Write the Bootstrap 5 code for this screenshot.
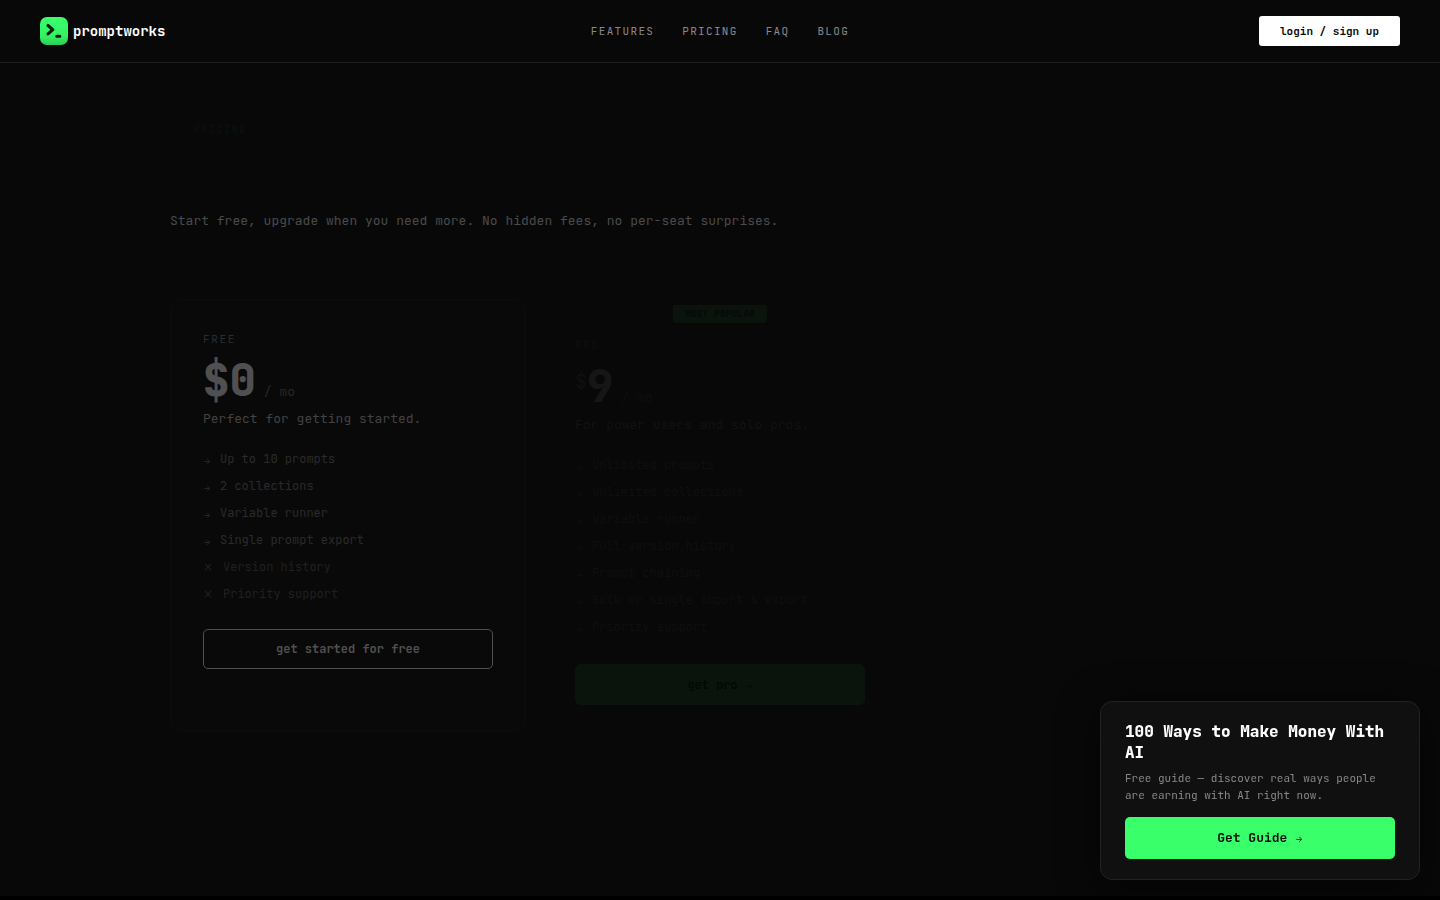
<!DOCTYPE html>
<html lang="en">
<head>
<meta charset="utf-8">
<meta name="viewport" content="width=device-width, initial-scale=1">
<title>promptworks – Pricing</title>
<link href="https://cdn.jsdelivr.net/npm/bootstrap@5.3.0/dist/css/bootstrap.min.css" rel="stylesheet">
<style>
:root { --accent: #39ff6a; }
body { background: #000; color: #fff; font-family: "JetBrains Mono", "DejaVu Sans Mono", "Liberation Mono", monospace; font-size: 13px; line-height: 20px; }
a { text-decoration: none; }
.site-header { background: #080808; border-bottom: 1px solid #1e1e1e; }
.header-bar { height: 62px; padding: 0 40px; display: grid; grid-template-columns: 1fr auto 1fr; align-items: center; }
.brand { color: #fff; font-size: 14px; font-weight: 700; gap: 5px; }
.main-nav { gap: 28px; font-size: 11px; letter-spacing: .12em; }
.main-nav a { color: #888; }
.btn-login { background: #fff; color: #080808; font-size: 11px; font-weight: 700; line-height: 16px; padding: 7px 18px; border: 0; border-radius: 3px; min-width: 141px; }
.pricing-section { background: #080808; min-height: calc(100vh - 67px); }
.pricing-inner { max-width: 1100px; padding-top: 57px; }
.eyebrow { font-size: 10px; letter-spacing: .15em; color: var(--accent); opacity: .04; padding-left: 24px; line-height: 20px; }
.intro { color: #4b4b4b; margin-top: 71px; }
.plan-grid { display: grid; grid-template-columns: repeat(3, 1fr); gap: 16px; margin-top: 68px; align-items: start; }
.plan { min-height: 433px; border: 1px solid #0c0c0c; border-radius: 10px; padding: 29px 32px; background: #090909; position: relative; overflow: hidden; }
.plan-name { font-size: 11px; letter-spacing: .15em; color: #2d2d2d; font-weight: 400; margin: 0; line-height: 20px; }
.price { line-height: 20px; margin-top: 7px; gap: 8px; color: #272727; }
.amount { font-size: 44px; font-weight: 800; line-height: 48px; color: #505050; }
.plan-text { color: #434343; margin: 5px 0 21px; }
.features { font-size: 12px; color: #2b2b2b; line-height: 19px; gap: 8px; margin-bottom: 25px; }
.features li { gap: 10px; }
.tick { font-family: Inter, sans-serif; font-size: 8px; line-height: 23px; height: 19px; width: 7px; }
.cross { font-family: "DejaVu Sans", sans-serif; font-size: 12px; width: 10px; text-align: center; }
.no-feature { color: #202020; }
.btn-plan { width: 100%; height: 40px; font-size: 12px; font-weight: 700; border-radius: 5px; padding: 0; color: #505050; border: 1px solid #505050; background: none; }
.plan-pro { margin-top: 6px; border: 0; padding: 30px 33px; background: #080808; }
.plan-pro .plan-name, .plan-pro .features, .plan-pro .price { color: #0f0f0f; }
.plan-pro .amount { color: #161616; }
.plan-pro .plan-text { color: #121212; }
.plan-pro .features { margin-bottom: 27px; }
.plan-pro .currency { font-size: 20px; line-height: 20px; vertical-align: 14px; font-weight: 400; color: #101010; }
.plan-pro .btn-plan { background: #0a140d; border-color: #0a140d; color: #050706; height: 41px; }
.popular { position: absolute; top: 0; left: 50%; transform: translateX(-50%); background: #0a140d; color: #050806; font-size: 9px; font-weight: 700; letter-spacing: .05em; line-height: 18px; padding: 0 12px; border-radius: 0 0 4px 4px; white-space: nowrap; }
.guide { position: fixed; right: 20px; bottom: 20px; width: 320px; background: #101010; border: 1px solid #222; border-radius: 12px; padding: 19px 24px 20px; box-shadow: 0 8px 40px rgba(0,0,0,.6); }
.guide h2 { font-size: 16px; font-weight: 800; line-height: 21px; margin-bottom: 7px; }
.guide p { font-size: 11px; line-height: 17px; color: #888; margin-bottom: 13px; }
.btn-guide { background: var(--accent); color: #080808; font-size: 13px; font-weight: 700; line-height: 20px; padding: 11px 0; width: 100%; border: 0; border-radius: 5px; }
.arrow { font-family: Inter, sans-serif; font-size: 8px; font-weight: 400; line-height: 1; }
</style>
</head>
<body>
<header class="site-header">
  <div class="header-bar">
    <a class="brand d-flex align-items-center" href="#">
      <svg width="28" height="28" viewBox="0 0 28 28" aria-hidden="true">
        <defs><linearGradient id="logo" x1="0" y1="0" x2="0" y2="1"><stop offset="0" stop-color="#39ff6a"/><stop offset=".65" stop-color="#36f264"/><stop offset="1" stop-color="#2bd055"/></linearGradient></defs>
        <rect width="28" height="28" rx="7" fill="url(#logo)"/>
        <path d="M8 8.5l4.8 4.2-4.8 4.2M16.8 19.3h3" fill="none" stroke="#071b0c" stroke-width="3.1" stroke-linecap="round" stroke-linejoin="round"/>
      </svg>
      <span>promptworks</span>
    </a>
    <nav class="main-nav d-flex" aria-label="Main">
      <a href="#">FEATURES</a><a href="#">PRICING</a><a href="#">FAQ</a><a href="#">BLOG</a>
    </nav>
    <button class="btn btn-login ms-auto" type="button">login / sign up</button>
  </div>
</header>
<main class="pricing-section">
  <div class="pricing-inner mx-auto">
    <div class="eyebrow">PRICING</div>
    <p class="intro mb-0">Start free, upgrade when you need more. No hidden fees, no per-seat surprises.</p>
    <div class="plan-grid">
      <section class="plan">
        <h2 class="plan-name">FREE</h2>
        <div class="price d-flex align-items-baseline"><span class="amount">$0</span><span>/ mo</span></div>
        <p class="plan-text">Perfect for getting started.</p>
        <ul class="features list-unstyled d-flex flex-column">
          <li class="d-flex"><span class="tick">→</span>Up to 10 prompts</li>
          <li class="d-flex"><span class="tick">→</span>2 collections</li>
          <li class="d-flex"><span class="tick">→</span>Variable runner</li>
          <li class="d-flex"><span class="tick">→</span>Single prompt export</li>
          <li class="d-flex no-feature"><span class="cross">×</span>Version history</li>
          <li class="d-flex no-feature"><span class="cross">×</span>Priority support</li>
        </ul>
        <button class="btn btn-plan" type="button">get started for free</button>
      </section>
      <section class="plan plan-pro">
        <span class="popular">MOST POPULAR</span>
        <h2 class="plan-name">PRO</h2>
        <div class="price d-flex align-items-baseline"><span class="amount"><span class="currency">$</span>9</span><span>/ mo</span></div>
        <p class="plan-text">For power users and solo pros.</p>
        <ul class="features list-unstyled d-flex flex-column">
          <li class="d-flex"><span class="tick">→</span>Unlimited prompts</li>
          <li class="d-flex"><span class="tick">→</span>Unlimited collections</li>
          <li class="d-flex"><span class="tick">→</span>Variable runner</li>
          <li class="d-flex"><span class="tick">→</span>Full version history</li>
          <li class="d-flex"><span class="tick">→</span>Prompt chaining</li>
          <li class="d-flex"><span class="tick">→</span>Bulk or single import &amp; export</li>
          <li class="d-flex"><span class="tick">→</span>Priority support</li>
        </ul>
        <button class="btn btn-plan" type="button">get pro <span class="arrow">→</span></button>
      </section>
    </div>
  </div>
</main>
<aside class="guide">
  <h2>100 Ways to Make Money With AI</h2>
  <p>Free guide — discover real ways people are earning with AI right now.</p>
  <button class="btn btn-guide" type="button">Get Guide <span class="arrow">→</span></button>
</aside>
<script src="https://cdn.jsdelivr.net/npm/bootstrap@5.3.0/dist/js/bootstrap.bundle.min.js"></script>
</body>
</html>
